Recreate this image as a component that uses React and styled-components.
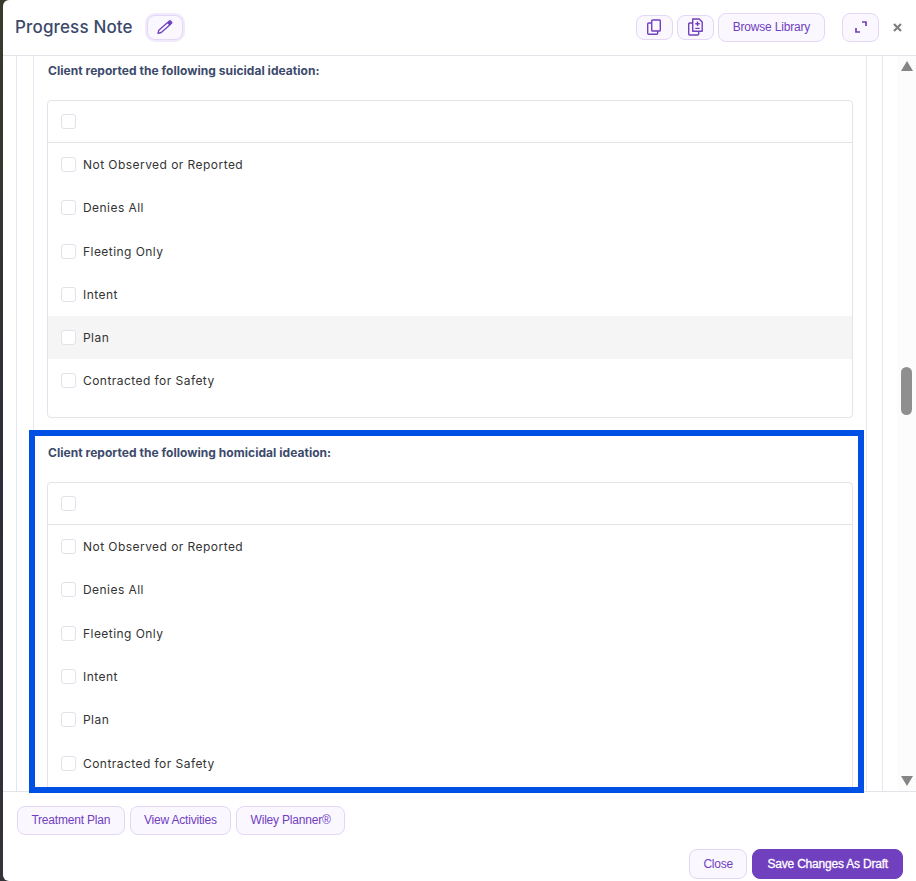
import styled, { createGlobalStyle } from "styled-components";

const OPTIONS = [
  "Not Observed or Reported",
  "Denies All",
  "Fleeting Only",
  "Intent",
  "Plan",
  "Contracted for Safety",
];

export default function App() {
  return (
    <>
      <GlobalStyle />
      <Page>
        <Modal>
          <Header>
            <TitleGroup>
              <Title>Progress Note</Title>
              <EditButton aria-label="Edit">
                <svg width="16" height="14" viewBox="0 0 16 14" fill="none" stroke="#7140bf" strokeWidth="1.3" strokeLinejoin="round">
                  <path d="M1 13.4l.8-3.2 8.8-7.6 2.2 2.4-8.6 7.5z" />
                  <path d="M11 2.2l1.4-1.2a.8.8 0 0 1 1.1 0l1 1.1a.8.8 0 0 1 0 1.1l-1.3 1.2z" fill="#7140bf" />
                </svg>
              </EditButton>
            </TitleGroup>
            <HeaderActions>
              <IconButton aria-label="Copy">
                <svg width="14" height="16" viewBox="0 0 14 16" fill="none" stroke="#7140bf" strokeWidth="1.4" strokeLinejoin="round">
                  <rect x="4.7" y="1" width="8.6" height="11" rx="0.8" />
                  <path d="M4.7 4H1.7a1 1 0 0 0-1 1v9.3a1 1 0 0 0 1 1h8a1 1 0 0 0 1-1V12" />
                </svg>
              </IconButton>
              <IconButton aria-label="Add from copy">
                <svg width="15" height="18" viewBox="0 0 15 18" fill="none" stroke="#7140bf" strokeWidth="1.4" strokeLinejoin="round">
                  <path d="M4.7 1h6.5l3 3v9.3h-9.5z" />
                  <path d="M4.7 5H1.7a1 1 0 0 0-1 1v10a1 1 0 0 0 1 1h8a1 1 0 0 0 1-1v-2.7" />
                  <path d="M9.5 3.6v4.4M7.3 5.8h4.4M7.3 10.4h4.4" />
                </svg>
              </IconButton>
              <TextButton>Browse Library</TextButton>
              <ExpandButton aria-label="Expand">
                <svg width="12" height="12" viewBox="0 0 12 12" fill="none" stroke="#7140bf" strokeWidth="1.7">
                  <path d="M7 1h4v4M1 7v4h4" />
                </svg>
              </ExpandButton>
              <CloseIcon aria-label="Dismiss">
                <svg width="9" height="9" viewBox="0 0 9 9" stroke="#7f7f7f" strokeWidth="2.2">
                  <path d="M1 1l7 7M8 1L1 8" />
                </svg>
              </CloseIcon>
            </HeaderActions>
          </Header>
          <Body>
            <OuterPanel>
              <InnerPanel>
                <Question
                  title="Client reported the following suicidal ideation:"
                  hoveredOption="Plan"
                />
                <Question title="Client reported the following homicidal ideation:" />
              </InnerPanel>
            </OuterPanel>
            <Scrollbar>
              <ArrowUp />
              <ScrollThumb />
              <ArrowDown />
            </Scrollbar>
            <Highlight />
          </Body>
          <Footer>
            <FooterLinks>
              <FooterLink>Treatment Plan</FooterLink>
              <FooterLink>View Activities</FooterLink>
              <FooterLink>Wiley Planner®</FooterLink>
            </FooterLinks>
            <FooterActions>
              <FooterButton>Close</FooterButton>
              <SaveButton>Save Changes As Draft</SaveButton>
            </FooterActions>
          </Footer>
        </Modal>
      </Page>
    </>
  );
}

function Question({ title, hoveredOption }) {
  return (
    <QuestionBlock>
      <QuestionTitle>{title}</QuestionTitle>
      <OptionsBox>
        <OptionsHeader>
          <Checkbox />
        </OptionsHeader>
        <OptionsList>
          {OPTIONS.map((option) => (
            <OptionRow key={option} $hovered={option === hoveredOption}>
              <Checkbox />
              <span>{option}</span>
            </OptionRow>
          ))}
        </OptionsList>
      </OptionsBox>
    </QuestionBlock>
  );
}

const GlobalStyle = createGlobalStyle`
  html, body {
    margin: 0;
    padding: 0;
    background: #2f2e2c;
    overflow: hidden;
  }
`;

const Page = styled.div`
  height: 881px;
  padding-left: 3px;
  box-sizing: border-box;
  background: linear-gradient(#3a3a2c, #2d2d3b 55%, #333338);
  font-family: "Inter", sans-serif;
`;

const Modal = styled.div`
  height: 100%;
  display: flex;
  flex-direction: column;
  background: #ffffff;
  border-top-left-radius: 6px;
  border-bottom-left-radius: 6px;
`;

const Header = styled.header`
  height: 56px;
  flex-shrink: 0;
  display: flex;
  align-items: center;
  justify-content: space-between;
  padding: 0 14px 1px 12px;
  box-sizing: border-box;
  border-bottom: 1px solid #e3e3ea;
`;

const TitleGroup = styled.div`
  display: flex;
  align-items: center;
  gap: 13px;
`;

const Title = styled.h1`
  margin: 0;
  font-size: 17px;
  font-weight: 500;
  line-height: 24px;
  letter-spacing: 0.15px;
  color: #3b4a6b;
`;

const PurpleButton = styled.button`
  display: flex;
  align-items: center;
  justify-content: center;
  box-sizing: border-box;
  padding: 0;
  background: #faf7ff;
  border: 1px solid #e2d7f7;
  border-radius: 8px;
  color: #7140bf;
  font-family: "Liberation Sans", Arial, sans-serif;
  font-size: 12px;
  font-weight: 400;
`;

const EditButton = styled(PurpleButton)`
  width: 36px;
  height: 25px;
  margin: 0 1px;
  box-shadow: 0 0 0 2px #f1eafc;
`;

const HeaderActions = styled.div`
  display: flex;
  align-items: center;
`;

const IconButton = styled(PurpleButton)`
  width: 37px;
  height: 25px;
  margin-right: 4px;
`;

const TextButton = styled(PurpleButton)`
  height: 29px;
  padding: 0 14px;
  letter-spacing: -0.2px;
`;

const ExpandButton = styled(PurpleButton)`
  width: 37px;
  height: 29px;
  margin-left: 17px;
`;

const CloseIcon = styled.button`
  display: flex;
  align-items: center;
  justify-content: center;
  width: 9px;
  height: 9px;
  margin-left: 14px;
  padding: 0;
  background: none;
  border: 0;
`;

const Body = styled.div`
  position: relative;
  flex: 1;
  min-height: 0;
  display: flex;
  border-bottom: 1px solid #e3e3ea;
`;

const OuterPanel = styled.div`
  width: 867px;
  margin-left: 13px;
  box-sizing: border-box;
  padding: 0 15px 0 16px;
  border: solid #e1e6f0;
  border-width: 0 1px;
  overflow: hidden;
`;

const InnerPanel = styled.div`
  box-sizing: border-box;
  height: 100%;
  padding: 0 13px;
  border: solid #e1e6f0;
  border-width: 0 1px;
`;

const QuestionBlock = styled.section`
  height: 382.3px;
  padding-top: 6.7px;
  box-sizing: border-box;
`;

const QuestionTitle = styled.h3`
  margin: 0 0 22px;
  padding-left: 1px;
  font-size: 12px;
  font-weight: 700;
  line-height: 15px;
  letter-spacing: 0.04px;
  color: #3b4a6b;
`;

const OptionsBox = styled.div`
  border: 1px solid #e4e4e7;
  border-radius: 4px;
`;

const OptionsHeader = styled.div`
  display: flex;
  align-items: center;
  height: 42px;
  padding-left: 13px;
  box-sizing: border-box;
  border-bottom: 1px solid #e4e4e7;
`;

const OptionsList = styled.div`
  padding-bottom: 14px;
`;

const OptionRow = styled.div`
  display: flex;
  align-items: center;
  gap: 7px;
  height: 43.33px;
  padding-left: 13px;
  background: ${(props) => (props.$hovered ? "#f5f5f5" : "transparent")};
  font-size: 12px;
  letter-spacing: 0.45px;
  color: #333333;
`;

const Checkbox = styled.span`
  display: block;
  flex-shrink: 0;
  width: 15px;
  height: 15px;
  box-sizing: border-box;
  background: #ffffff;
  border: 1px solid #dfe3ea;
  border-radius: 3px;
`;

const Scrollbar = styled.div`
  position: relative;
  flex: 1;
  margin-left: 14px;
  background: #fcfcfc;
  display: flex;
  flex-direction: column;
  align-items: center;
`;

const ArrowUp = styled.div`
  width: 0;
  height: 0;
  margin-top: 5px;
  border: solid transparent;
  border-width: 0 6.5px 10px;
  border-bottom-color: #858585;
`;

const ArrowDown = styled.div`
  width: 0;
  height: 0;
  margin-top: auto;
  margin-bottom: 5px;
  border: solid transparent;
  border-width: 10px 6.5px 0;
  border-top-color: #858585;
`;

const ScrollThumb = styled.div`
  width: 11px;
  height: 48px;
  margin-top: 296px;
  background: #8f8f8f;
  border-radius: 6px;
`;

/* annotation drawn over the second question */
const Highlight = styled.div`
  position: absolute;
  left: 26px;
  top: 374px;
  width: 835px;
  height: 363px;
  box-sizing: border-box;
  border: 6px solid #0050e6;
  pointer-events: none;
`;

const Footer = styled.footer`
  flex-shrink: 0;
  height: 89px;
  box-sizing: border-box;
  padding: 14px 13px 0 14px;
  display: flex;
  flex-direction: column;
`;

const FooterLinks = styled.div`
  display: flex;
  gap: 5px;
`;

const FooterLink = styled(TextButton)`
  padding: 0 13.4px 1px;
`;

const FooterActions = styled.div`
  display: flex;
  justify-content: flex-end;
  gap: 5px;
  margin-top: 14px;
`;

const FooterButton = styled(FooterLink)`
  height: 30px;
`;

const SaveButton = styled(FooterButton)`
  padding: 0 14px 1px;
  background: #7140bf;
  border-color: #7140bf;
  color: #ffffff;
  letter-spacing: -0.2px;
  -webkit-text-stroke: 0.3px #ffffff;
`;
